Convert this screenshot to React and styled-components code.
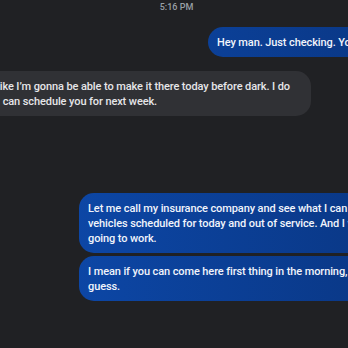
import styled, { createGlobalStyle } from "styled-components";

const Global = createGlobalStyle`
    html, body {
        margin: 0;
        padding: 0;
        background: #202124;
    }
    body {
        width: 348px;
        height: 348px;
        overflow: hidden;
        font-family: Roboto, "Noto Sans", sans-serif;
    }
`

const Thread = styled.div`
    display: flex;
    flex-direction: column;
    width: 348px;
    height: 348px;
    overflow: hidden;
    background: #202124;
`

const Stamp = styled.div`
    align-self: center;
    margin-left: 5px;
    padding-top: 1px;
    font-size: 9px;
    line-height: 12px;
    font-weight: 500;
    color: #9aa0a6;
`

const Bubble = styled.div`
    box-sizing: border-box;
    padding: 7.5px 9px;
    font-size: 11px;
    line-height: 15px;
    font-weight: 500;
    letter-spacing: -0.1px;
    white-space: nowrap;
    border-radius: 15px;
`

const Sent = styled(Bubble)`
    margin-left: ${props => props.indent}px;
    margin-top: ${props => props.gap}px;
    width: 420px;
    color: #f1f4fb;
    background: linear-gradient(to right, #0d4aad, #0a3989) fixed;
`

const Received = styled(Bubble)`
    margin-left: -20px;
    margin-top: ${props => props.gap}px;
    width: 331px;
    padding-left: 17px;
    color: #e6e6e9;
    background: #303135;
`

export default function App() {
    return (
        <>
            <Global />
            <Thread>
                <Stamp>5:16 PM</Stamp>
                <Sent indent={208} gap={14}>Hey man. Just checking. You still coming?</Sent>
                <Received gap={14}>
                    like I’m gonna be able to make it there today before dark. I do<br />
                    I can schedule you for next week.
                </Received>
                <Sent indent={79} gap={77}>
                    Let me call my insurance company and see what I can do.<br />
                    vehicles scheduled for today and out of service. And I was<br />
                    going to work.
                </Sent>
                <Sent indent={79} gap={3}>
                    I mean if you can come here first thing in the morning, I<br />
                    guess.
                </Sent>
            </Thread>
        </>
    )
}
